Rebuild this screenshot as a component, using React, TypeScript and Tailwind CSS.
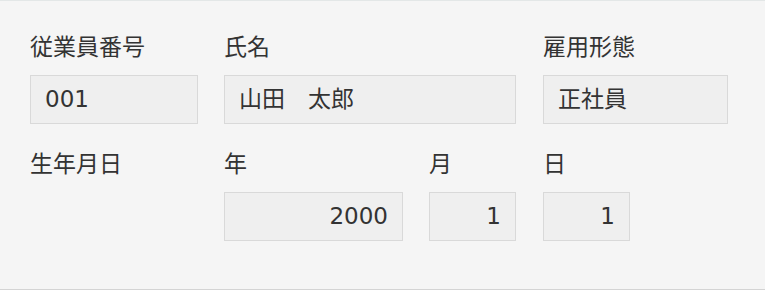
import React from "react";

const font = { fontFamily: '"DejaVu Sans", "Noto Sans CJK JP", sans-serif' };

function Field({
  label,
  value,
  width,
  align = "left",
}: {
  label: string;
  value: string;
  width: string;
  align?: "left" | "right";
}) {
  return (
    <div className={`flex flex-col ${width}`}>
      <div className="h-[32px] leading-[32px] text-[23px] text-[#333]">{label}</div>
      <div
        className={`mt-[12px] h-[49px] border border-[#d9d9d9] bg-[#efefef] px-[14px] flex items-center text-[23px] text-[#333] ${
          align === "right" ? "justify-end" : "justify-start"
        }`}
      >
        {value}
      </div>
    </div>
  );
}

export default function App() {
  return (
    <div
      style={font}
      className="w-[765px] h-[290px] bg-[#f5f5f5] border-t border-t-[#e3e7e7] border-b border-b-[#d4d4d4] pt-[30px] pl-[30px]"
    >
      <div className="flex">
        <Field label="従業員番号" value="001" width="w-[168px]" />
        <div className="w-[26px]" />
        <Field label="氏名" value="山田　太郎" width="w-[292px]" />
        <div className="w-[27px]" />
        <Field label="雇用形態" value="正社員" width="w-[185px]" />
      </div>
      <div className="flex mt-[24px]">
        <div className="w-[194px] h-[32px] leading-[32px] text-[23px] text-[#333]">生年月日</div>
        <Field label="年" value="2000" width="w-[179px]" align="right" />
        <div className="w-[26px]" />
        <Field label="月" value="1" width="w-[87px]" align="right" />
        <div className="w-[27px]" />
        <Field label="日" value="1" width="w-[87px]" align="right" />
      </div>
    </div>
  );
}
